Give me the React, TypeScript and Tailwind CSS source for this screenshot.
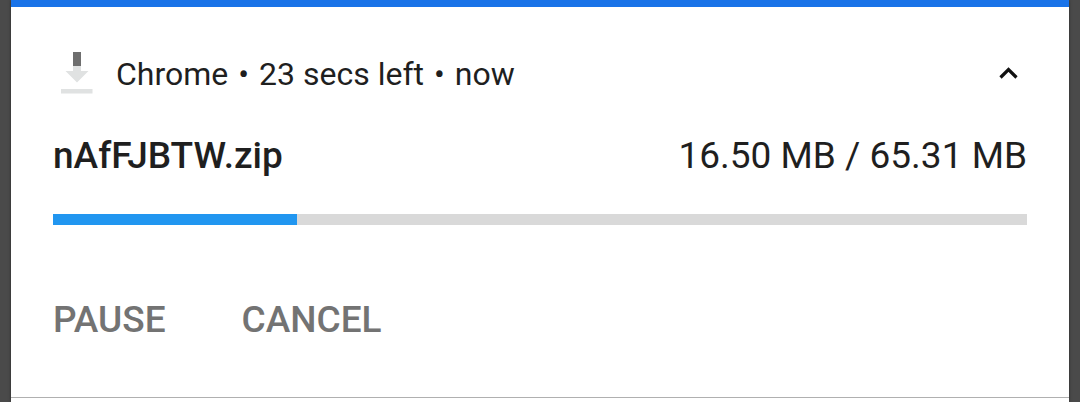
export default function App() {
  const received = 16.5;
  const total = 65.31;
  const percent = Math.floor((received / total) * 100);
  return (
    <div className="min-h-screen bg-[#4a4a4a] px-[11px] font-['Roboto',sans-serif] text-[#1f1f1f]">
      <main className="flex min-h-screen flex-col border-t-[7px] border-[#1a73e8] bg-white shadow-[0_0_3px_#2b2b2b]">
        <section className="flex flex-1 flex-col border-b border-[#b0b0b0] px-[42px] pt-[42px]">
          <header className="flex h-12 items-center">
            <svg className="ml-2 h-12 w-8" viewBox="0 0 32 48" aria-hidden="true">
              <path fill="#6e6e6e" d="M12 3h8v14h-8z" />
              <path fill="#e0e2e2" d="M12 17h8v5h7.500L16 33.500 4.500 22H12zM0 40h31.500v4.500H0z" />
            </svg>
            <h1 className="ml-[23px] flex flex-1 gap-[10px] pt-0.5 text-[32px] leading-10">
              <span>Chrome</span>
              <span>•</span>
              <span>23 secs left</span>
              <span>•</span>
              <span>now</span>
            </h1>
            <button type="button" aria-label="Collapse" className="p-2">
              <svg className="h-5 w-5" viewBox="0 0 20 20" fill="none" stroke="#111111" strokeWidth="3.2" aria-hidden="true">
                <path d="M1.500 14.500l8-8 8 8" />
              </svg>
            </button>
          </header>
          <div className="mt-[35px] flex h-12 items-center justify-between text-[37px] leading-12">
            <h2 className="font-medium">nAfFJBTW.zip</h2>
            <p>16.50 MB / 65.31 MB</p>
          </div>
          <div role="progressbar" aria-label="Download progress" aria-valuemin={0} aria-valuemax={100} aria-valuenow={percent} className="mt-[34px] h-[11px] bg-[#d9d9d9]">
            <div className="h-full bg-[#2196f0]" style={{ width: `${percent}%` }} />
          </div>
          <div className="mt-[71px] flex gap-[76px] text-[37px] leading-12 font-medium text-[#737373]">
            <button type="button">PAUSE</button>
            <button type="button">CANCEL</button>
          </div>
        </section>
        <div className="h-1 bg-white" />
      </main>
    </div>
  );
}
